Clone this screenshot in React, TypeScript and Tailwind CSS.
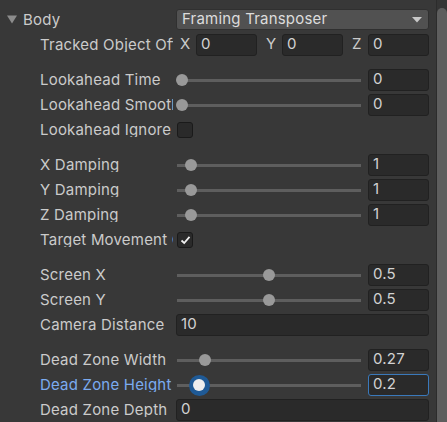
import type { ReactNode } from "react";

const labelCls =
  "w-[133px] mr-[3px] shrink-0 overflow-hidden whitespace-nowrap text-[15px] leading-none tracking-[0.2px]";

function Field({ value, wide, focused }: { value: string; wide?: boolean; focused?: boolean }) {
  return (
    <div
      className={`h-[22px] ${wide ? "flex-1" : "w-[61px]"} shrink-0 rounded-[3px] border ${
        focused ? "border-[#3a79bb]" : "border-[#212121]"
      } bg-[#2a2a2a] pl-[4px] flex items-center text-[15px] tracking-[0.2px] text-[#d2d2d2]`}
    >
      {value}
    </div>
  );
}

function Slider({ pct, value, focused }: { pct: number; value: string; focused?: boolean }) {
  return (
    <div className="flex items-center gap-[7px] flex-1">
      <div className="relative h-[22px] w-[185px] shrink-0">
        <div className="absolute left-[1px] right-0 top-[10px] h-[3px] bg-[#5e5e5e]" />
        {focused && (
          <div
            className="absolute top-[1px] h-[21px] w-[21px] rounded-full bg-[#1f5a96]"
            style={{ left: pct * 174 - 4.5 }}
          />
        )}
        <div
          className={`absolute top-[5px] h-[12px] w-[12px] rounded-full ${
            focused ? "bg-[#eeeeee]" : "bg-[#999999]"
          }`}
          style={{ left: pct * 174 }}
        />
      </div>
      <Field value={value} focused={focused} />
    </div>
  );
}

function Checkbox({ checked }: { checked?: boolean }) {
  return (
    <div className="h-[16px] w-[16px] ml-[1px] rounded-[3px] border border-[#1a1a1a] bg-[#2a2a2a] flex items-center justify-center">
      {checked && (
        <svg width="11" height="10" viewBox="0 0 11 10">
          <polyline points="1.5,5.5 4.2,8 9.5,1.8" fill="none" stroke="#f0f0f0" strokeWidth="1.8" />
        </svg>
      )}
    </div>
  );
}

function Row({ label, children, blue }: { label: string; children: ReactNode; blue?: boolean }) {
  return (
    <div className="flex h-[25px] items-center pl-[40px] pr-[7px]">
      <div className={`${labelCls} ${blue ? "text-[#7babf0]" : "text-[#cbcbcb]"}`}>{label}</div>
      {children}
    </div>
  );
}

function Gap() {
  return <div className="h-[10px]" />;
}

export default function App() {
  return (
    <div className="flex h-[422px] w-[447px] overflow-hidden bg-[#383838] font-['Inter','Noto_Sans',sans-serif]">
      <div className="flex-1 pt-[7px]">
        {/* Body header */}
        <div className="flex h-[25px] items-center pr-[7px]">
          <svg className="ml-[7px] mr-[6px]" width="10" height="9" viewBox="0 0 10 9">
            <polygon points="0,0.5 10,0.5 5,8.5" fill="#8c8c8c" />
          </svg>
          <div className="w-[153px] text-[15px] leading-none tracking-[0.2px] text-[#cbcbcb]">Body</div>
          <div className="flex h-[21px] flex-1 items-center justify-between rounded-[3px] border border-[#303030] bg-[#515151] pl-[5px] pr-[6px] text-[15px] tracking-[0.2px] text-[#dcdcdc]">
            <span>Framing Transposer</span>
            <svg width="10" height="6" viewBox="0 0 10 6">
              <polygon points="0,0 10,0 5,5.5" fill="#c8c8c8" />
            </svg>
          </div>
        </div>

        <Row label="Tracked Object Offset">
          <div className="flex flex-1 gap-[5px]">
            {["X", "Y", "Z"].map((a) => (
              <div key={a} className="flex flex-1 items-center">
                <div className="w-[20px] pl-[4px] text-[15px] text-[#cbcbcb]">{a}</div>
                <Field value="0" wide />
              </div>
            ))}
          </div>
        </Row>

        <Gap />
        <Row label="Lookahead Time">
          <Slider pct={0} value="0" />
        </Row>
        <Row label="Lookahead Smoothing">
          <Slider pct={0} value="0" />
        </Row>
        <Row label="Lookahead Ignore Y">
          <Checkbox />
        </Row>

        <Gap />
        <Row label="X Damping">
          <Slider pct={0.05} value="1" />
        </Row>
        <Row label="Y Damping">
          <Slider pct={0.05} value="1" />
        </Row>
        <Row label="Z Damping">
          <Slider pct={0.05} value="1" />
        </Row>
        <Row label="Target Movement Only">
          <Checkbox checked />
        </Row>

        <Gap />
        <Row label="Screen X">
          <Slider pct={0.5} value="0.5" />
        </Row>
        <Row label="Screen Y">
          <Slider pct={0.5} value="0.5" />
        </Row>
        <Row label="Camera Distance">
          <Field value="10" wide />
        </Row>

        <Gap />
        <Row label="Dead Zone Width">
          <Slider pct={0.135} value="0.27" />
        </Row>
        <Row label="Dead Zone Height" blue>
          <Slider pct={0.1} value="0.2" focused />
        </Row>
        <Row label="Dead Zone Depth">
          <Field value="0" wide />
        </Row>
      </div>

      {/* scrollbar */}
      <div className="w-[11px] shrink-0 border-l border-[#2c2c2c] bg-[#353535] pt-[8px]">
        <div className="h-full w-full rounded-t-[5px] bg-[#5e5e5e]" />
      </div>
    </div>
  );
}
